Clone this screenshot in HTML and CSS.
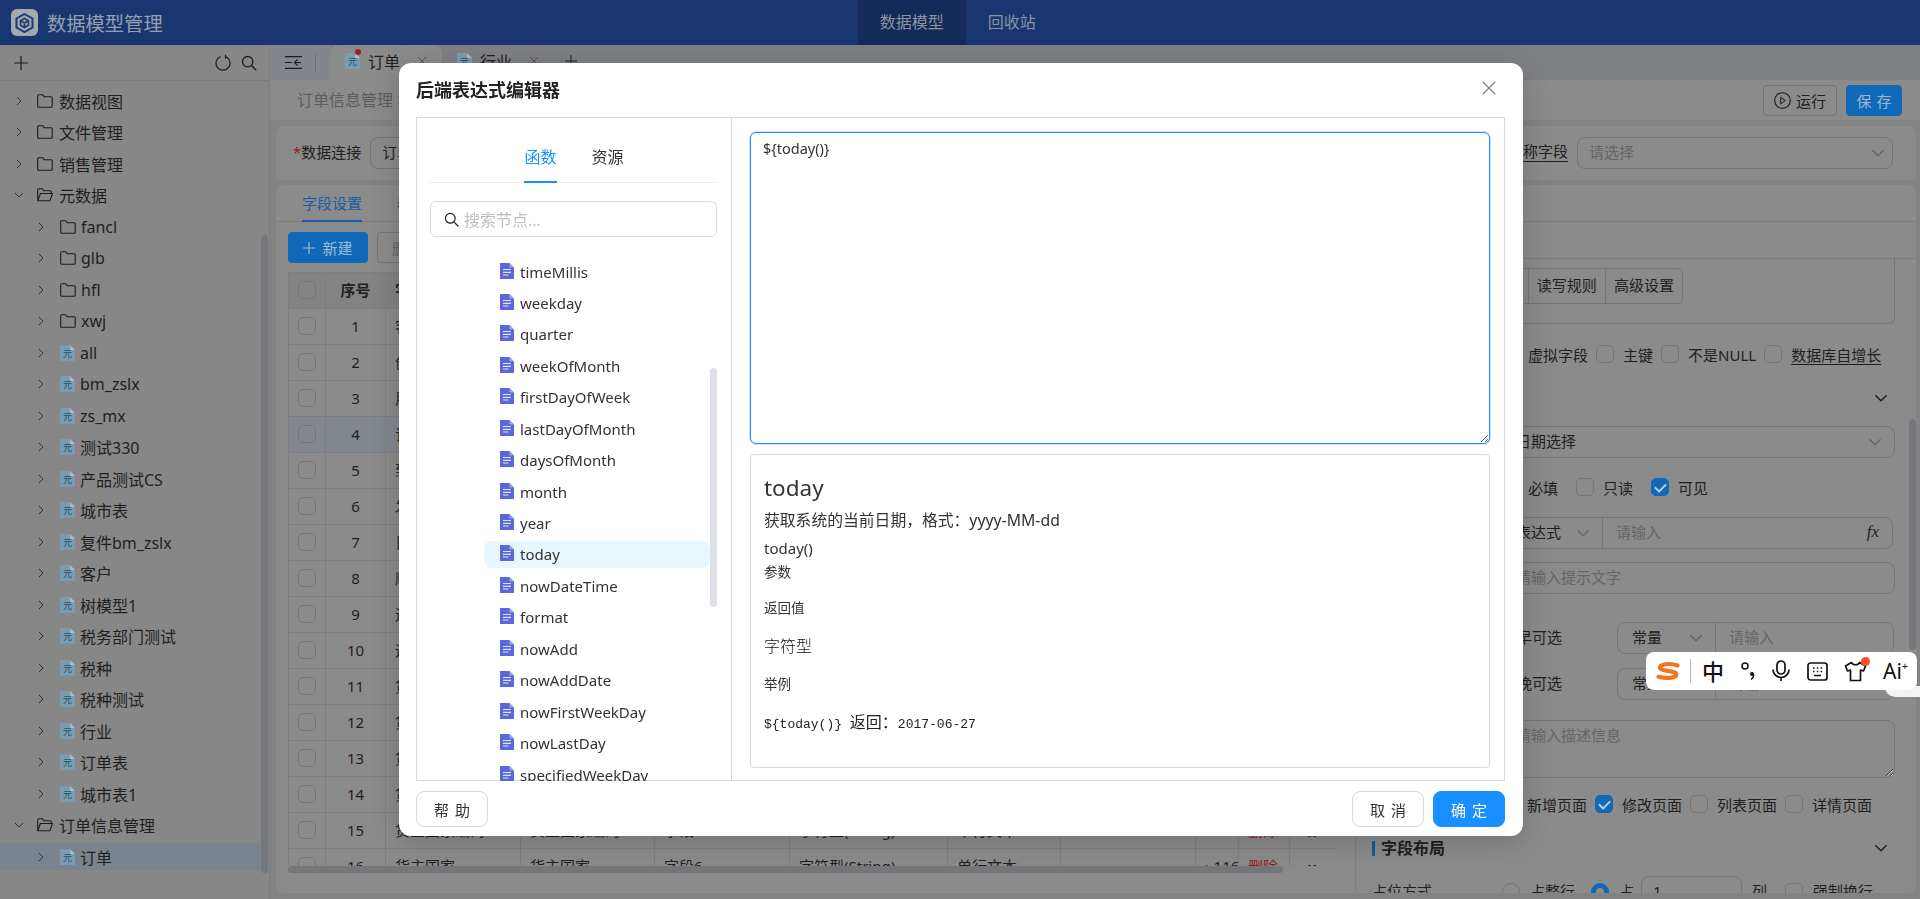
FILE: index.html
```html
<!DOCTYPE html>
<html lang="zh-CN">

<head>
    <meta charset="UTF-8">
    <meta name="viewport" content="width=device-width, initial-scale=1.0">
    <title>数据模型管理</title>
    <link rel="stylesheet" href="styles.css">
</head>

<body>
    <svg class="sprites" width="0" height="0">
        <symbol id="i-right" viewBox="0 0 10 10"><path d="M3 1l4 4-4 4" fill="none" stroke="currentColor"/></symbol>
        <symbol id="i-down" viewBox="0 0 10 10"><path d="M1 3l4 4 4-4" fill="none" stroke="currentColor"/></symbol>
        <symbol id="i-folder" viewBox="0 0 16 14"><path d="M.7 1.7q0-1 1-1h4l1.5 2h7q1 0 1 1v8.6q0 1-1 1H1.7q-1 0-1-1z" fill="none" stroke="#1c1c1c" stroke-width="1.1"/></symbol>
        <symbol id="i-open" viewBox="0 0 16 14"><path d="M.7 12.5V1.7q0-1 1-1h3.600l1.500 2h6.400q1 0 1 1v1.600M.8 12.800l2.600-7.300h12l-2.500 7.300z" fill="none" stroke="#1c1c1c" stroke-width="1.1"/></symbol>
        <symbol id="i-meta" viewBox="0 0 15 16"><path d="M0 0h10l5 5v11H0z" fill="#7b9cae"/><path d="M10 0l5 5h-5z" fill="#a6bcc8"/><text x="7.500" y="12" text-anchor="middle" font-size="9" fill="#14506e" font-family="Noto Sans CJK SC">元</text></symbol>
        <symbol id="i-doc" viewBox="0 0 14 16"><path d="M0 0h9.500L14 4.500V16H0z" fill="#5b68d9"/><path d="M9.500 0L14 4.500H9.500z" fill="#9aa3ea"/><path d="M3 6.500h8M3 9.300h8M3 12h5.500" stroke="#dfe2fa" stroke-width="1.200"/></symbol>
        <symbol id="i-search" viewBox="0 0 16 16"><circle cx="6.700" cy="6.700" r="5.200" fill="none" stroke="currentColor" stroke-width="1.300"/><path d="M10.500 10.500l4.700 4.700" stroke="currentColor" stroke-width="1.300"/></symbol>
    </svg>

    <header class="app-header">
        <div class="brand">
            <span class="brand-logo">
                <svg width="19" height="20" viewBox="0 0 19 20"><path d="M9.500 1L17.500 5.500v9L9.500 19l-8-4.500v-9z" fill="none" stroke="#1d3a74" stroke-width="2"/><path d="M9.500 5.500l4 2.300v4.400l-4 2.300-4-2.300V7.800z M5.500 7.800l4 2.200 4-2.200 M9.500 10v4.500" fill="none" stroke="#1d3a74" stroke-width="1.600"/></svg>
            </span>
            <span class="brand-name">数据模型管理</span>
        </div>
        <nav class="top-nav">
            <a class="top-nav-item active">数据模型</a>
            <a class="top-nav-item">回收站</a>
        </nav>
    </header>

    <div class="app-body">
        <aside class="sidebar">
            <div class="side-tools">
                <svg class="side-plus" width="14" height="14" viewBox="0 0 14 14"><path d="M7 0v14M0 7h14" stroke="#1c1c1c" stroke-width="1.200"/></svg>
                <svg class="side-reload" width="16" height="17" viewBox="0 0 16 17"><path d="M5.500 2.600a7 7 0 1 0 5 0M10.500 .8v3.400h-.2" fill="none" stroke="#1c1c1c" stroke-width="1.200"/></svg>
                <svg class="side-find" width="16" height="16"><use href="#i-search"/></svg>
            </div>
            <div class="side-tree">
                <div class="tree-row lv1"><svg class="arrow"><use href="#i-right"/></svg><svg class="folder"><use href="#i-folder"/></svg>数据视图</div>
                <div class="tree-row lv1"><svg class="arrow"><use href="#i-right"/></svg><svg class="folder"><use href="#i-folder"/></svg>文件管理</div>
                <div class="tree-row lv1"><svg class="arrow"><use href="#i-right"/></svg><svg class="folder"><use href="#i-folder"/></svg>销售管理</div>
                <div class="tree-row lv1"><svg class="arrow"><use href="#i-down"/></svg><svg class="folder"><use href="#i-open"/></svg>元数据</div>
                <div class="tree-row lv2"><svg class="arrow"><use href="#i-right"/></svg><svg class="folder"><use href="#i-folder"/></svg>fancl</div>
                <div class="tree-row lv2"><svg class="arrow"><use href="#i-right"/></svg><svg class="folder"><use href="#i-folder"/></svg>glb</div>
                <div class="tree-row lv2"><svg class="arrow"><use href="#i-right"/></svg><svg class="folder"><use href="#i-folder"/></svg>hfl</div>
                <div class="tree-row lv2"><svg class="arrow"><use href="#i-right"/></svg><svg class="folder"><use href="#i-folder"/></svg>xwj</div>
                <div class="tree-row lv2"><svg class="arrow"><use href="#i-right"/></svg><svg class="meta"><use href="#i-meta"/></svg>all</div>
                <div class="tree-row lv2"><svg class="arrow"><use href="#i-right"/></svg><svg class="meta"><use href="#i-meta"/></svg>bm_zslx</div>
                <div class="tree-row lv2"><svg class="arrow"><use href="#i-right"/></svg><svg class="meta"><use href="#i-meta"/></svg>zs_mx</div>
                <div class="tree-row lv2"><svg class="arrow"><use href="#i-right"/></svg><svg class="meta"><use href="#i-meta"/></svg>测试330</div>
                <div class="tree-row lv2"><svg class="arrow"><use href="#i-right"/></svg><svg class="meta"><use href="#i-meta"/></svg>产品测试CS</div>
                <div class="tree-row lv2"><svg class="arrow"><use href="#i-right"/></svg><svg class="meta"><use href="#i-meta"/></svg>城市表</div>
                <div class="tree-row lv2"><svg class="arrow"><use href="#i-right"/></svg><svg class="meta"><use href="#i-meta"/></svg>复件bm_zslx</div>
                <div class="tree-row lv2"><svg class="arrow"><use href="#i-right"/></svg><svg class="meta"><use href="#i-meta"/></svg>客户</div>
                <div class="tree-row lv2"><svg class="arrow"><use href="#i-right"/></svg><svg class="meta"><use href="#i-meta"/></svg>树模型1</div>
                <div class="tree-row lv2"><svg class="arrow"><use href="#i-right"/></svg><svg class="meta"><use href="#i-meta"/></svg>税务部门测试</div>
                <div class="tree-row lv2"><svg class="arrow"><use href="#i-right"/></svg><svg class="meta"><use href="#i-meta"/></svg>税种</div>
                <div class="tree-row lv2"><svg class="arrow"><use href="#i-right"/></svg><svg class="meta"><use href="#i-meta"/></svg>税种测试</div>
                <div class="tree-row lv2"><svg class="arrow"><use href="#i-right"/></svg><svg class="meta"><use href="#i-meta"/></svg>行业</div>
                <div class="tree-row lv2"><svg class="arrow"><use href="#i-right"/></svg><svg class="meta"><use href="#i-meta"/></svg>订单表</div>
                <div class="tree-row lv2"><svg class="arrow"><use href="#i-right"/></svg><svg class="meta"><use href="#i-meta"/></svg>城市表1</div>
                <div class="tree-row lv1"><svg class="arrow"><use href="#i-down"/></svg><svg class="folder"><use href="#i-open"/></svg>订单信息管理</div>
                <div class="tree-row lv2 selected"><svg class="arrow"><use href="#i-right"/></svg><svg class="meta"><use href="#i-meta"/></svg>订单</div>
            </div>
            <span class="side-scroll"></span>
        </aside>

        <main class="main">
            <div class="tab-strip">
                <div class="tab-toggle">
                    <svg width="17" height="13" viewBox="0 0 17 13"><path d="M0 .6h17M0 12.400h17M0 6.500h7M16 6.500h-6M12.500 3.500l-3 3 3 3" fill="none" stroke="#1c1c1c" stroke-width="1.100"/></svg>
                </div>
                <div class="page-tab active">
                    <span class="page-tab-icon"><svg class="meta"><use href="#i-meta"/></svg><i class="red-dot"></i></span>
                    <span>订单</span>
                    <svg class="tab-close" width="10" height="10" viewBox="0 0 10 10"><path d="M1 1l8 8M9 1l-8 8" stroke="#555"/></svg>
                </div>
                <div class="page-tab">
                    <span class="page-tab-icon"><svg class="meta"><use href="#i-meta"/></svg></span>
                    <span>行业</span>
                    <svg class="tab-close" width="10" height="10" viewBox="0 0 10 10"><path d="M1 1l8 8M9 1l-8 8" stroke="#555"/></svg>
                </div>
                <svg class="tab-add" width="12" height="12" viewBox="0 0 12 12"><path d="M6 0v12M0 6h12" stroke="#1c1c1c"/></svg>
            </div>

            <div class="crumb-bar">
                <span class="crumb">订单信息管理 &gt; 订单</span>
                <div class="crumb-actions">
                    <button class="btn btn-run">
                        <svg width="17" height="17" viewBox="0 0 17 17"><circle cx="8.500" cy="8.500" r="7.800" fill="none" stroke="#1c1c1c" stroke-width="1.100"/><path d="M6.700 5.300l4.600 3.200-4.600 3.200z" fill="none" stroke="#1c1c1c"/></svg>运行
                    </button>
                    <button class="btn btn-blue btn-save">保 存</button>
                </div>
            </div>

            <div class="content">
                <section class="card card-conn">
                    <label class="conn-label"><em>*</em>数据连接</label>
                    <div class="ctl conn-select">订单数据源</div>
                    <label class="conn-name">名称字段</label>
                    <div class="ctl ctl-select name-select ph">请选择<svg class="chev"><use href="#i-down"/></svg></div>
                </section>

                <section class="card card-main">
                    <div class="card-tabs">
                        <a class="card-tab active">字段设置</a>
                        <a class="card-tab">表单设置</a>
                    </div>
                    <div class="card-body">
                        <div class="fields">
                            <div class="field-tools">
                                <button class="btn btn-blue btn-new"><svg width="12" height="12" viewBox="0 0 12 12"><path d="M6 0v12M0 6h12" stroke="#9db9d3" stroke-width="1.200"/></svg>新建</button>
                                <button class="btn btn-del">删除</button>
                            </div>
                            <div class="table-wrap">
                                <table class="field-table">
                                    <colgroup>
                                        <col class="c-check"><col class="c-no"><col class="c-name"><col class="c-title"><col class="c-col"><col class="c-type"><col class="c-ctl"><col class="c-note"><col class="c-len"><col class="c-op"><col class="c-drag">
                                    </colgroup>
                                    <thead>
                                        <tr><th><i class="cb"></i></th><th>序号</th><th>字段名称</th><th>显示名称</th><th>物理字段</th><th>数据类型</th><th>控件类型</th><th>默认值</th><th>长度</th><th>操作</th><th></th></tr>
                                    </thead>
                                    <tbody>
                                        <tr><td><i class="cb"></i></td><td class="no">1</td><td>客户编号</td><td>客户编号</td><td>字段1</td><td>字符型(String)</td><td>单行文本</td><td></td><td>› 116</td><td class="del">删除</td><td class="drag">::</td></tr>
                                        <tr><td><i class="cb"></i></td><td class="no">2</td><td>创建人</td><td>创建人</td><td>字段2</td><td>字符型(String)</td><td>单行文本</td><td></td><td>› 116</td><td class="del">删除</td><td class="drag">::</td></tr>
                                        <tr><td><i class="cb"></i></td><td class="no">3</td><td>用户编号</td><td>用户编号</td><td>字段3</td><td>字符型(String)</td><td>单行文本</td><td></td><td>› 116</td><td class="del">删除</td><td class="drag">::</td></tr>
                                        <tr class="current"><td><i class="cb"></i></td><td class="no">4</td><td>订购日期</td><td>订购日期</td><td>字段4</td><td>日期型(Date)</td><td>日期选择</td><td></td><td>› 116</td><td class="del">删除</td><td class="drag">::</td></tr>
                                        <tr><td><i class="cb"></i></td><td class="no">5</td><td>到货日期</td><td>到货日期</td><td>字段5</td><td>日期型(Date)</td><td>日期选择</td><td></td><td>› 116</td><td class="del">删除</td><td class="drag">::</td></tr>
                                        <tr><td><i class="cb"></i></td><td class="no">6</td><td>发货日期</td><td>发货日期</td><td>字段6</td><td>日期型(Date)</td><td>日期选择</td><td></td><td>› 116</td><td class="del">删除</td><td class="drag">::</td></tr>
                                        <tr><td><i class="cb"></i></td><td class="no">7</td><td>日期</td><td>日期</td><td>字段7</td><td>日期型(Date)</td><td>日期选择</td><td></td><td>› 116</td><td class="del">删除</td><td class="drag">::</td></tr>
                                        <tr><td><i class="cb"></i></td><td class="no">8</td><td>顺序号</td><td>顺序号</td><td>字段8</td><td>字符型(String)</td><td>单行文本</td><td></td><td>› 116</td><td class="del">删除</td><td class="drag">::</td></tr>
                                        <tr><td><i class="cb"></i></td><td class="no">9</td><td>运货商</td><td>运货商</td><td>字段9</td><td>字符型(String)</td><td>单行文本</td><td></td><td>› 116</td><td class="del">删除</td><td class="drag">::</td></tr>
                                        <tr><td><i class="cb"></i></td><td class="no">10</td><td>运货费</td><td>运货费</td><td>字段10</td><td>字符型(String)</td><td>单行文本</td><td></td><td>› 116</td><td class="del">删除</td><td class="drag">::</td></tr>
                                        <tr><td><i class="cb"></i></td><td class="no">11</td><td>货主名称</td><td>货主名称</td><td>字段1</td><td>字符型(String)</td><td>单行文本</td><td></td><td>› 116</td><td class="del">删除</td><td class="drag">::</td></tr>
                                        <tr><td><i class="cb"></i></td><td class="no">12</td><td>货主地址</td><td>货主地址</td><td>字段2</td><td>字符型(String)</td><td>单行文本</td><td></td><td>› 116</td><td class="del">删除</td><td class="drag">::</td></tr>
                                        <tr><td><i class="cb"></i></td><td class="no">13</td><td>货主城市</td><td>货主城市</td><td>字段3</td><td>字符型(String)</td><td>单行文本</td><td></td><td>› 116</td><td class="del">删除</td><td class="drag">::</td></tr>
                                        <tr><td><i class="cb"></i></td><td class="no">14</td><td>货主地区</td><td>货主地区</td><td>字段4</td><td>字符型(String)</td><td>单行文本</td><td></td><td>› 116</td><td class="del">删除</td><td class="drag">::</td></tr>
                                        <tr><td><i class="cb"></i></td><td class="no">15</td><td>货主国家编码</td><td>货主国家编码</td><td>字段5</td><td>字符型(String)</td><td>单行文本</td><td></td><td>› 116</td><td class="del">删除</td><td class="drag">::</td></tr>
                                        <tr><td><i class="cb"></i></td><td class="no">16</td><td>货主国家</td><td>货主国家</td><td>字段6</td><td>字符型(String)</td><td>单行文本</td><td></td><td>› 116</td><td class="del">删除</td><td class="drag">::</td></tr>
                                    </tbody>
                                </table>
                            </div>
                            <span class="table-scroll"></span>
                        </div>

                        <div class="props">
                            <div class="props-tabs"></div>
                            <div class="seg-box">
                                <div class="seg">
                                    <span>基本信息</span><span>控件设置</span><span>读写规则</span><span>高级设置</span>
                                </div>
                            </div>
                            <div class="check-row first">
                                <span class="check"><i class="cb"></i>虚拟字段</span>
                                <span class="check"><i class="cb"></i>主键</span>
                                <span class="check"><i class="cb"></i>不是NULL</span>
                                <span class="check"><i class="cb"></i><u>数据库自增长</u></span>
                            </div>
                            <div class="sec-head first-sec">
                                <span class="sec-title">控件属性</span>
                                <svg class="chev dark"><use href="#i-down"/></svg>
                            </div>
                            <div class="form-row r-type">
                                <label>控件类型</label>
                                <div class="ctl ctl-select grow">日期选择<svg class="chev"><use href="#i-down"/></svg></div>
                            </div>
                            <div class="check-row wide r-flags">
                                <span class="check"><i class="cb"></i>必填</span>
                                <span class="check"><i class="cb"></i>只读</span>
                                <span class="check"><i class="cb on"></i>可见</span>
                            </div>
                            <div class="form-row r-default">
                                <label>默认值</label>
                                <div class="ctl-group g-expr">
                                    <div class="g-select">表达式<svg class="chev"><use href="#i-down"/></svg></div>
                                    <div class="g-input ph">请输入<span class="fx">fx</span></div>
                                </div>
                            </div>
                            <div class="form-row r-hint">
                                <label>提示文字</label>
                                <div class="ctl grow ph">请输入提示文字</div>
                            </div>
                            <div class="time-row r-early">
                                <label>最早可选</label>
                                <div class="ctl-group g-time">
                                    <div class="g-select">常量<svg class="chev"><use href="#i-down"/></svg></div>
                                    <div class="g-input ph">请输入</div>
                                </div>
                            </div>
                            <div class="time-row r-late">
                                <label>最晚可选</label>
                                <div class="ctl-group g-time">
                                    <div class="g-select">常量<svg class="chev"><use href="#i-down"/></svg></div>
                                    <div class="g-input ph">请输入</div>
                                </div>
                            </div>
                            <div class="form-row r-desc">
                                <label>描述信息</label>
                                <textarea class="desc-input" placeholder="请输入描述信息" readonly></textarea>
                            </div>
                            <div class="check-row r-pages">
                                <span class="check"><i class="cb"></i>新增页面</span>
                                <span class="check"><i class="cb on"></i>修改页面</span>
                                <span class="check"><i class="cb"></i>列表页面</span>
                                <span class="check"><i class="cb"></i>详情页面</span>
                            </div>
                            <div class="sec-head r-layout">
                                <span class="sec-title">字段布局</span>
                                <svg class="chev dark"><use href="#i-down"/></svg>
                            </div>
                            <div class="place-row">
                                <label>占位方式</label>
                                <i class="radio"></i><span>占整行</span>
                                <i class="radio on"></i><span>占</span>
                                <div class="ctl place-num">1</div><span>列</span>
                                <i class="cb"></i><span>强制换行</span>
                            </div>
                            <span class="props-scroll"></span>
                        </div>
                    </div>
                </section>
            </div>
        </main>
    </div>

    <div class="modal">
        <div class="modal-head">
            <h2 class="modal-title">后端表达式编辑器</h2>
            <svg class="modal-close" width="14" height="14" viewBox="0 0 14 14"><path d="M.7.7l12.600 12.600M13.300.7L.7 13.300" stroke="#8c8c8c" stroke-width="1.400"/></svg>
        </div>
        <div class="modal-body">
            <div class="fn-pane">
                <div class="fn-tabs">
                    <a class="fn-tab active">函数</a>
                    <a class="fn-tab">资源</a>
                </div>
                <div class="fn-search">
                    <svg width="15" height="15"><use href="#i-search"/></svg>
                    <span>搜索节点...</span>
                </div>
                <div class="fn-tree">
                    <div class="fn-row"><svg class="doc"><use href="#i-doc"/></svg>timeMillis</div>
                    <div class="fn-row"><svg class="doc"><use href="#i-doc"/></svg>weekday</div>
                    <div class="fn-row"><svg class="doc"><use href="#i-doc"/></svg>quarter</div>
                    <div class="fn-row"><svg class="doc"><use href="#i-doc"/></svg>weekOfMonth</div>
                    <div class="fn-row"><svg class="doc"><use href="#i-doc"/></svg>firstDayOfWeek</div>
                    <div class="fn-row"><svg class="doc"><use href="#i-doc"/></svg>lastDayOfMonth</div>
                    <div class="fn-row"><svg class="doc"><use href="#i-doc"/></svg>daysOfMonth</div>
                    <div class="fn-row"><svg class="doc"><use href="#i-doc"/></svg>month</div>
                    <div class="fn-row"><svg class="doc"><use href="#i-doc"/></svg>year</div>
                    <div class="fn-row selected"><svg class="doc"><use href="#i-doc"/></svg>today</div>
                    <div class="fn-row"><svg class="doc"><use href="#i-doc"/></svg>nowDateTime</div>
                    <div class="fn-row"><svg class="doc"><use href="#i-doc"/></svg>format</div>
                    <div class="fn-row"><svg class="doc"><use href="#i-doc"/></svg>nowAdd</div>
                    <div class="fn-row"><svg class="doc"><use href="#i-doc"/></svg>nowAddDate</div>
                    <div class="fn-row"><svg class="doc"><use href="#i-doc"/></svg>nowFirstWeekDay</div>
                    <div class="fn-row"><svg class="doc"><use href="#i-doc"/></svg>nowLastDay</div>
                    <div class="fn-row"><svg class="doc"><use href="#i-doc"/></svg>specifiedWeekDay</div>
                    <span class="fn-scroll"></span>
                </div>
            </div>
            <div class="editor-pane">
                <textarea class="expr-input" readonly>${today()}</textarea>
                <div class="doc-box">
                    <h3 class="doc-name">today</h3>
                    <p class="doc-desc">获取系统的当前日期，格式：yyyy-MM-dd</p>
                    <p class="doc-sign">today()</p>
                    <p class="doc-label doc-arg">参数</p>
                    <p class="doc-label doc-ret">返回值</p>
                    <p class="doc-type">字符型</p>
                    <p class="doc-label doc-eg">举例</p>
                    <p class="doc-code">${today()} <span>返回：</span>2017-06-27</p>
                </div>
            </div>
        </div>
        <div class="modal-foot">
            <button class="mbtn">帮 助</button>
            <div class="foot-right">
                <button class="mbtn">取 消</button>
                <button class="mbtn primary">确 定</button>
            </div>
        </div>
    </div>

    <div class="ime-tail"></div>
    <div class="ime-bar">
        <svg width="24" height="20" viewBox="0 0 24 20"><path d="M21.500 4.500C14 1.800 3.500 3 4 7c.4 3.200 16 2.600 16.300 6.200.3 3.800-10 4.700-17.800 2.600" fill="none" stroke="#f4741f" stroke-width="4.200" stroke-linecap="round"/></svg>
        <i class="ime-sep"></i>
        <span class="ime-zh">中</span>
        <svg width="14" height="20" viewBox="0 0 14 20"><circle cx="4" cy="5" r="3" fill="none" stroke="#111" stroke-width="1.500"/><circle cx="11" cy="13" r="2" fill="#111"/><path d="M12.800 13.500q0 3-2.800 5" fill="none" stroke="#111" stroke-width="1.500"/></svg>
        <svg width="18" height="22" viewBox="0 0 18 22"><rect x="5" y="1" width="8" height="13" rx="4" fill="none" stroke="#111" stroke-width="1.700"/><path d="M1 9.500a8 8 0 0 0 16 0M9 17.500V21" fill="none" stroke="#111" stroke-width="1.700"/></svg>
        <svg width="21" height="19" viewBox="0 0 21 19"><rect x="1" y="1" width="19" height="17" rx="2.500" fill="none" stroke="#111" stroke-width="1.700"/><path d="M6 6h1.500M9.800 6h1.500M13.600 6h1.500M6 9.500h1.500M9.800 9.500h1.500M13.600 9.500h1.500M7 13.500h7" stroke="#111" stroke-width="1.500"/></svg>
        <span class="ime-shirt">
            <svg width="23" height="21" viewBox="0 0 23 21"><path d="M7.500 1.500L1.500 5l2 5 3-1v10.500h10V9l3 1 2-5-6-3.500c-1 3-7 3-8 0z" fill="none" stroke="#111" stroke-width="1.700" stroke-linejoin="round"/></svg>
            <i class="ime-dot"></i>
        </span>
        <span class="ime-ai">Ai<sup>+</sup></span>
    </div>
</body>

</html>
```

FILE: styles.css
```css
* {
    box-sizing: border-box;
}

html,
body {
    margin: 0;
    height: 100%;
    overflow: hidden;
}

body {
    font-family: "Noto Sans", "Noto Sans CJK SC", sans-serif;
    font-size: 15px;
    color: #1f1f1f;
    background: #838383;
}

.sprites {
    position: absolute;
}

i {
    font-style: normal;
}

button {
    font-family: inherit;
}

/* header */
.app-header {
    height: 45px;
    background: #1a3670;
    display: flex;
    position: relative;
}

.brand {
    display: flex;
    align-items: center;
    padding-left: 11px;
}

.brand-logo {
    width: 27px;
    height: 27px;
    border-radius: 6px;
    background: #a3a8b1;
    display: flex;
    align-items: center;
    justify-content: center;
}

.brand-name {
    margin-left: 9px;
    font-size: 19.300px;
    color: #97a0ae;
}

.top-nav {
    display: flex;
    margin-left: 695px;
}

.top-nav-item {
    height: 45px;
    line-height: 45px;
    padding: 0 22px;
    font-size: 16px;
    color: #8b93a0;
    white-space: nowrap;
}

.top-nav-item.active {
    width: 108px;
    background: #142a59;
}

/* layout */
.app-body {
    display: flex;
    height: 854px;
}

.sidebar {
    width: 270px;
    background: #878787;
    border-right: 1px solid #7d7d7d;
    position: relative;
    overflow: hidden;
}

.side-tools {
    height: 36px;
    border-bottom: 1px solid #7d7d7d;
    display: flex;
    align-items: center;
    padding: 0 12px 0 14px;
}

.side-plus {
    margin-right: auto;
}

.side-find {
    margin-left: 10px;
    color: #1c1c1c;
}

.side-tree {
    padding-top: 6px;
}

.tree-row {
    height: 27px;
    margin-bottom: 4.500px;
    width: 261px;
    display: flex;
    align-items: center;
    font-size: 16px;
    white-space: nowrap;
}

.tree-row.lv1 {
    padding-left: 14px;
}

.tree-row.lv2 {
    padding-left: 36px;
}

.tree-row.selected {
    background: #7a838e;
}

.arrow {
    width: 10px;
    height: 10px;
    color: #333;
    margin-right: 13px;
    flex: none;
}

.tree-row.lv2 .arrow {
    margin-right: 14px;
}

.folder {
    width: 16px;
    height: 14px;
    margin-right: 6px;
    flex: none;
}

.tree-row.lv2 .folder,
.tree-row.lv2 .meta {
    margin-right: 5px;
}

.meta {
    width: 15px;
    height: 16px;
    margin-right: 6px;
    flex: none;
}

.side-scroll {
    position: absolute;
    left: 261px;
    top: 190px;
    width: 7px;
    height: 638px;
    border-radius: 4px;
    background: #74777b;
}

.main {
    flex: 1;
    min-width: 0;
}

/* page tabs */
.tab-strip {
    height: 35px;
    background: #7f8084;
    display: flex;
    align-items: center;
}

.tab-toggle {
    width: 60px;
    height: 35px;
    background: #83868c;
    display: flex;
    align-items: center;
    padding-left: 15px;
    position: relative;
}

.tab-toggle::after {
    content: "";
    position: absolute;
    left: 45px;
    top: 8px;
    height: 20px;
    border-left: 1px solid #6f7175;
}

.page-tab {
    width: 112px;
    height: 35px;
    padding: 0 0 4px 15px;
    border-radius: 8px 8px 0 0;
    display: flex;
    align-items: center;
    font-size: 16px;
    position: relative;
}

.page-tab.active {
    background: #8b8b8b;
}

.page-tab-icon {
    position: relative;
    display: flex;
    margin-right: 2px;
}

.red-dot {
    position: absolute;
    left: 10px;
    top: -4px;
    width: 6px;
    height: 6px;
    border-radius: 50%;
    background: #9c1f27;
}

.tab-close {
    margin-left: 17px;
}

.tab-add {
    margin: 0 0 4px 11px;
}

/* breadcrumb */
.crumb-bar {
    height: 40px;
    background: #8b8b8b;
    display: flex;
    align-items: center;
    justify-content: space-between;
    padding: 0 18px 0 27px;
}

.crumb {
    font-size: 16px;
    color: #5d5d5d;
    padding-bottom: 2px;
}

.crumb-actions {
    display: flex;
    gap: 9px;
}

.btn {
    height: 31px;
    border-radius: 4px;
    font-size: 15px;
    padding: 0;
    display: flex;
    align-items: center;
    justify-content: center;
    border: 1px solid #757575;
    background: transparent;
    color: #1f1f1f;
    word-spacing: 1px;
}

.btn-run {
    width: 74px;
    gap: 5px;
}

.btn-blue {
    border-color: #0f69b8;
    background: #0f69b8;
    color: #9db9d3;
}

.btn-save {
    width: 56px;
}

/* cards */
.content {
    padding: 6px 4px 0 6px;
    background: #838383;
    height: 779px;
}

.card {
    background: #8b8b8b;
    border-radius: 8px;
}

.card-conn {
    height: 54px;
    display: flex;
    align-items: center;
    padding: 0 23px 0 17px;
}

.conn-label {
    padding-bottom: 3px;
}

.conn-label em {
    color: #8f1f24;
    font-style: normal;
}

.ctl {
    height: 32px;
    line-height: 29px;
    border: 1px solid #767676;
    border-radius: 8px;
    padding: 0 11px;
    position: relative;
    white-space: nowrap;
}

.ph {
    color: #666;
}

.conn-select {
    width: 300px;
    margin-left: 9px;
}

.conn-name {
    margin: 0 9px 3px auto;
    border-bottom: 1px solid #1f1f1f;
    line-height: 19px;
}

.name-select {
    width: 316px;
}

.chev {
    width: 14px;
    height: 14px;
    color: #666;
}

.chev.dark {
    color: #1c1c1c;
}

.ctl-select .chev {
    position: absolute;
    right: 12px;
    top: 8px;
}

.name-select.ctl-select .chev {
    right: 7px;
}

.card-main {
    margin-top: 5px;
    height: 708px;
    overflow: hidden;
}

.card-tabs {
    height: 37px;
    border-bottom: 1px solid #7d7d7d;
    display: flex;
    padding-left: 26px;
    gap: 35px;
}

.card-tab {
    height: 37px;
    line-height: 36px;
}

.card-tab.active {
    color: #1a5da6;
    border-bottom: 2px solid #1a5da6;
}

.card-body {
    display: flex;
    height: 671px;
}

/* field table */
.fields {
    width: 1079px;
    padding: 10px 0 0 12px;
    position: relative;
    flex: none;
}

.field-tools {
    display: flex;
    gap: 9px;
}

.btn-new {
    width: 80px;
    gap: 7px;
}

.btn-del {
    width: 80px;
    color: #666;
    justify-content: flex-start;
    padding-left: 14px;
}

.table-wrap {
    margin-top: 9px;
    width: 1047px;
    height: 594px;
    overflow: hidden;
}

.field-table {
    width: 1047px;
    table-layout: fixed;
    border-collapse: collapse;
}

.c-check { width: 37px; }
.c-no { width: 60px; }
.c-name { width: 135px; }
.c-title { width: 134px; }
.c-col { width: 135px; }
.c-type { width: 158px; }
.c-ctl { width: 113px; }
.c-note { width: 135px; }
.c-len { width: 43px; }
.c-op { width: 51px; }
.c-drag { width: 46px; }

.field-table th,
.field-table td {
    height: 36px;
    padding: 0 0 2px 9px;
    border: 1px solid #7e7e7e;
    text-align: left;
    font-size: 15px;
    font-weight: 400;
    white-space: nowrap;
    overflow: hidden;
}

.field-table th {
    background: #838383;
    font-weight: 700;
}

.field-table th:nth-child(2),
.field-table td.no {
    text-align: center;
    padding: 0 0 2px;
}

.field-table tr.current td {
    background: #83888f;
}

.field-table td.del {
    color: #8f1f24;
}

.field-table td.drag {
    text-align: center;
    padding: 0;
    font-weight: 700;
    letter-spacing: 1px;
}

.table-scroll {
    position: absolute;
    left: 12px;
    bottom: 20px;
    width: 995px;
    height: 7px;
    border-radius: 4px;
    background: #76777b;
}

.cb {
    display: block;
    width: 18px;
    height: 18px;
    border: 1px solid #767676;
    border-radius: 5px;
    flex: none;
    position: relative;
}

.cb.on {
    background: #0f69b8;
    border-color: #0f69b8;
}

.cb.on::after {
    content: "";
    position: absolute;
    left: 5px;
    top: 2px;
    width: 5px;
    height: 9px;
    border: solid #b9cfe3;
    border-width: 0 2px 2px 0;
    transform: rotate(45deg);
}

/* right side properties */
.props {
    flex: 1;
    min-width: 0;
    padding: 0 21px 0 16px;
    border-left: 1px solid #7d7d7d;
    position: relative;
    overflow: hidden;
}

.props-tabs {
    margin: 0 -21px 0 -16px;
    height: 37px;
    border-bottom: 1px solid #7d7d7d;
}

.seg-box {
    height: 65px;
    padding-top: 9px;
    border: solid #767676;
    border-width: 0 1px 1px 0;
    border-radius: 0 0 6px 0;
}

.seg {
    display: inline-flex;
    height: 36px;
    border: 1px solid #767676;
    border-radius: 6px;
}

.seg span {
    width: 77.300px;
    line-height: 33px;
    text-align: center;
    border-left: 1px solid #767676;
}

.seg span:first-child {
    border-left: 0;
}

.check-row {
    display: flex;
    padding-left: 129px;
    height: 20px;
    align-items: center;
}

.check-row.first {
    margin-top: 20px;
}

.check {
    display: flex;
    align-items: center;
    gap: 9px;
    margin-right: 8px;
    white-space: nowrap;
}

.check u {
    text-underline-offset: 3px;
}

.check-row.wide .check {
    margin-right: 18px;
}

.sec-head {
    height: 20px;
    display: flex;
    align-items: center;
    justify-content: space-between;
    padding-right: 7px;
}

.first-sec {
    margin-top: 24px;
}

.sec-title {
    font-size: 16px;
    font-weight: 700;
    padding-left: 6px;
    border-left: 3px solid #0f5ba3;
    line-height: 15px;
}

.form-row {
    display: flex;
}

.form-row label {
    width: 132px;
    line-height: 32px;
    flex: none;
}

.grow {
    flex: 1;
}

.r-type { margin-top: 18px; }
.r-flags { margin-top: 19px; }
.r-default { margin-top: 20px; }
.r-hint { margin-top: 13px; }
.r-early { margin-top: 28px; }
.r-late { margin-top: 14px; }
.r-desc { margin-top: 20px; }
.r-pages { margin-top: 16px; padding-left: 128px; }
.r-layout { margin-top: 24px; }

.ctl-group {
    height: 32px;
    display: flex;
    border: 1px solid #767676;
    border-radius: 8px;
}

.g-expr {
    width: 389px;
}

.g-select {
    width: 98px;
    padding-left: 11px;
    line-height: 29px;
    border-right: 1px solid #767676;
    position: relative;
    flex: none;
    white-space: nowrap;
}

.g-select .chev {
    position: absolute;
    right: 12px;
    top: 8px;
}

.g-input {
    flex: 1;
    padding: 0 13px;
    line-height: 29px;
    position: relative;
}

.fx {
    position: absolute;
    right: 13px;
    top: -1px;
    font-family: "Liberation Serif", serif;
    font-style: italic;
    font-size: 17px;
    color: #1f1f1f;
}

.time-row {
    display: flex;
    height: 32px;
    padding-left: 130px;
    align-items: center;
}

.time-row label {
    width: 115px;
    flex: none;
    padding-bottom: 4px;
}

.g-time {
    width: 277px;
}

.g-time .g-select {
    padding-left: 14px;
}

.desc-input {
    flex: 1;
    height: 58px;
    padding: 3px 11px;
    border: 1px solid #767676;
    border-radius: 8px;
    background: transparent;
    font: inherit;
    outline: 0;
}

.desc-input::placeholder {
    color: #666;
}

.place-row {
    display: flex;
    align-items: center;
    margin-top: 18px;
    height: 32px;
    white-space: nowrap;
}

.place-row label {
    width: 130px;
    flex: none;
    padding-bottom: 4px;
}

.place-row span {
    padding-bottom: 4px;
}

.radio {
    width: 18px;
    height: 18px;
    border-radius: 50%;
    border: 1px solid #767676;
    margin-right: 10px;
    flex: none;
}

.radio.on {
    border: 5px solid #0f69b8;
    margin-left: 16px;
}

.place-num {
    width: 101px;
    margin: 0 10px 0 7px;
}

.place-row .cb {
    margin: 0 10px 0 18px;
}

.props-scroll {
    position: absolute;
    left: 553px;
    top: 197px;
    width: 7px;
    height: 231px;
    border-radius: 4px;
    background: #74777b;
}

/* modal */
.modal {
    position: fixed;
    left: 399px;
    top: 63px;
    width: 1124px;
    height: 773px;
    background: #fff;
    border-radius: 12px;
    box-shadow: 0 6px 30px rgba(0, 0, 0, .18);
    padding: 0 18px 0 17px;
    color: #333;
}

.modal-head {
    height: 54px;
    display: flex;
    align-items: center;
    justify-content: space-between;
    padding-right: 9px;
}

.modal-title {
    margin: 0 0 2px;
    font-size: 18px;
    font-weight: 700;
    color: #222;
}

.modal-close {
    margin-top: -4px;
}

.modal-body {
    height: 664px;
    display: flex;
    border: 1px solid #d9d9d9;
}

.fn-pane {
    width: 315px;
    padding: 0 14px 0 13px;
    border-right: 1px solid #d9d9d9;
    flex: none;
}

.fn-tabs {
    height: 65px;
    display: flex;
    justify-content: center;
    gap: 35px;
    border-bottom: 1px solid #eee;
    padding-left: 1px;
}

.fn-tab {
    height: 65px;
    font-size: 16px;
    line-height: 79px;
}

.fn-tab.active {
    color: #1890ff;
    border-bottom: 2px solid #1890ff;
}

.fn-search {
    margin-top: 18px;
    height: 36px;
    border: 1px solid #d9d9d9;
    border-radius: 6px;
    display: flex;
    align-items: center;
    padding-left: 13px;
    gap: 5px;
    font-size: 16px;
    color: #bfbfbf;
}

.fn-search svg {
    color: #222;
}

.fn-tree {
    margin-top: 21px;
    height: 523px;
    padding-left: 54px;
    position: relative;
    overflow: hidden;
}

.fn-row {
    height: 27px;
    margin-bottom: 4.450px;
    padding-left: 16px;
    width: 226px;
    border-radius: 8px;
    display: flex;
    align-items: center;
    font-size: 15px;
    color: #333;
}

.fn-row.selected {
    background: #e6f7ff;
}

.doc {
    width: 14px;
    height: 16px;
    margin: -2px 6px 0 0;
}

.fn-scroll {
    position: absolute;
    right: 0;
    top: 110px;
    width: 7px;
    height: 239px;
    border-radius: 4px;
    background: #dde0e6;
}

.editor-pane {
    flex: 1;
    padding: 14px 13px 0 18px;
}

.expr-input {
    display: block;
    width: 740px;
    height: 312px;
    padding: 5px 12px;
    border: 1px solid #1890ff;
    border-radius: 6px;
    box-shadow: 0 0 0 1px rgba(24, 144, 255, .2);
    font: 14.500px "Noto Sans", sans-serif;
    color: #333;
    outline: 0;
}

.doc-box {
    margin-top: 10px;
    width: 740px;
    height: 314px;
    padding: 16px 13px;
    border: 1px solid #d9d9d9;
    border-radius: 4px;
}

.doc-box p,
.doc-box h3 {
    margin: 0;
    font-weight: 400;
}

.doc-box .doc-name {
    font-size: 22.500px;
    line-height: 34px;
}

.doc-box .doc-desc {
    margin-top: 3px;
    font-size: 15.800px;
    line-height: 24px;
}

.doc-box .doc-sign {
    margin-top: 4px;
    font-size: 15px;
    line-height: 24px;
}

.doc-label {
    font-size: 13.500px;
    line-height: 20px;
}

.doc-box .doc-arg {
    margin-top: 2px;
}

.doc-box .doc-ret {
    margin-top: 16px;
}

.doc-box .doc-type {
    margin-top: 16px;
    font-size: 16px;
    line-height: 24px;
    font-weight: 300;
    color: #111;
}

.doc-box .doc-eg {
    margin-top: 16px;
}

.doc-box .doc-code {
    margin-top: 16px;
    font: 13px "Liberation Mono", "Noto Sans CJK SC", monospace;
    line-height: 22px;
    color: #222;
}

.doc-code span {
    font-family: "Noto Sans CJK SC", sans-serif;
    font-size: 16px;
}

.modal-foot {
    height: 55px;
    padding-top: 10px;
    display: flex;
    align-items: flex-start;
    justify-content: space-between;
}

.foot-right {
    display: flex;
    gap: 9px;
}

.mbtn {
    width: 72px;
    height: 36px;
    border: 1px solid #d9d9d9;
    border-radius: 8px;
    background: #fff;
    font-size: 15px;
    word-spacing: 2px;
    color: #333;
    padding: 0;
}

.mbtn.primary {
    border-color: #1890ff;
    background: #1890ff;
    color: #fff;
}

/* input method toolbar lying over the page */
.ime-bar {
    position: fixed;
    left: 1646px;
    top: 652px;
    width: 271px;
    height: 38px;
    background: #fff;
    border-radius: 8px;
    display: flex;
    align-items: center;
    padding-left: 10px;
    gap: 17px;
    color: #111;
}

.ime-sep {
    width: 1px;
    height: 24px;
    background: #bbb;
    margin: 0 -6px 0 -7px;
}

.ime-zh {
    font-size: 22px;
    line-height: 30px;
    font-weight: 500;
}

.ime-shirt {
    position: relative;
    display: flex;
    margin-left: -1px;
}

.ime-dot {
    position: absolute;
    right: -3px;
    top: -4px;
    width: 9px;
    height: 9px;
    border-radius: 50%;
    background: #f4502f;
}

.ime-ai {
    font-size: 21px;
    line-height: 24px;
    margin-left: -1px;
}

.ime-ai sup {
    font-size: 11px;
    vertical-align: 9px;
    line-height: 0;
}

.ime-tail {
    position: fixed;
    left: 1885px;
    top: 686px;
    width: 35px;
    height: 11px;
    border-radius: 0 0 0 10px;
    background: #f3f3f3;
}
```
